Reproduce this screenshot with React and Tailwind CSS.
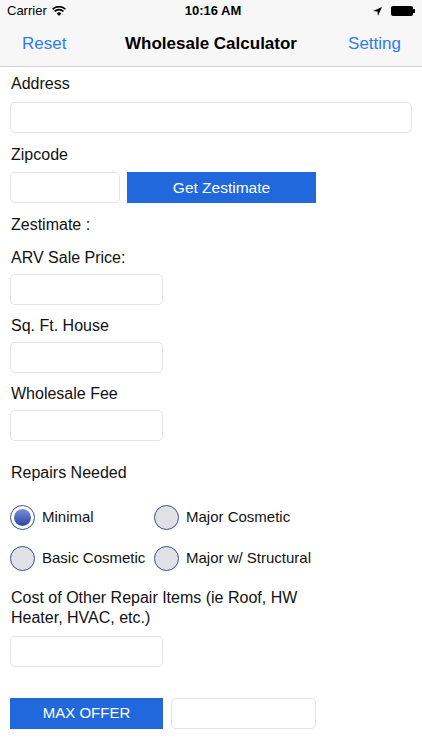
import React, { useState } from "react";

const Field = ({ className = "" }) => (
  <input
    type="text"
    className={`h-[31px] rounded-[5px] border border-[#e3e3e3] bg-white outline-none px-2 text-[16px] ${className}`}
  />
);

const Radio = ({ checked, label, onClick }) => (
  <button onClick={onClick} className="flex items-center gap-[7px] text-left">
    <span
      className={`w-[25px] h-[25px] rounded-full border-[1.5px] border-[#3c4f95] flex items-center justify-center ${
        checked ? "bg-white" : "bg-[#e1e1e5]"
      }`}
    >
      {checked && <span className="w-[17px] h-[17px] rounded-full bg-gradient-to-b from-[#7b8fd8] to-[#2c45a6]"></span>}
    </span>
    <span className="text-[15px] text-[#111]">{label}</span>
  </button>
);

const App = () => {
  const [repair, setRepair] = useState("Minimal");

  return (
    <div className="w-[422px] h-[750px] bg-white overflow-hidden" style={{ fontFamily: '"Liberation Sans", Arial, sans-serif' }}>
      {/* Status + Nav */}
      <div className="bg-[#f7f7f7] border-b border-[#d2d2d2]">
        <div className="h-[22px] flex items-center justify-between px-[7px] text-[13px] text-black">
          <div className="flex items-center gap-[5px] w-[100px]">
            <span>Carrier</span>
            <svg width="14" height="10" viewBox="0 0 14 10">
              <path d="M7 10 L4.6 7.4 A3.4 3.4 0 0 1 9.4 7.4 Z" fill="#000" />
              <path d="M2.6 5.4 A6.3 6.3 0 0 1 11.4 5.4" stroke="#000" strokeWidth="1.6" fill="none" />
              <path d="M0.6 3.2 A9.2 9.2 0 0 1 13.4 3.2" stroke="#000" strokeWidth="1.6" fill="none" />
            </svg>
          </div>
          <span className="font-bold text-[13px] pl-[4px]">10:16 AM</span>
          <div className="flex items-center justify-end gap-[9px] w-[100px]">
            <svg width="9" height="9" viewBox="0 0 10 10">
              <path d="M10 0 L0 4.5 L5 5 L5.5 10 Z" fill="#000" />
            </svg>
            <div className="flex items-center">
              <div className="w-[22px] h-[10px] bg-black rounded-[2px]"></div>
              <div className="w-[1.5px] h-[4px] bg-black"></div>
            </div>
          </div>
        </div>
        <div className="h-[44px] grid grid-cols-[1fr_auto_1fr] items-center px-[21px] text-[17px]">
          <button className="text-[#2d7bf0] justify-self-start pl-[1px]">Reset</button>
          <span className="font-bold text-black">Wholesale Calculator</span>
          <button className="text-[#2d7bf0] justify-self-end">Setting</button>
        </div>
      </div>

      <div className="px-[10px] text-[16px] text-[#111]">
        <div className="pl-[1px] pt-[5px] h-[35px]">Address</div>
        <Field className="w-full" />

        <div className="pl-[1px] pt-[10px] h-[39px]">Zipcode</div>
        <div className="flex gap-[7px]">
          <Field className="w-[110px]" />
          <button className="w-[189px] h-[31px] bg-[#2068db] text-white text-[15.5px]">Get Zestimate</button>
        </div>

        <div className="pl-[1px] pt-[10px] h-[35px]">Zestimate :</div>
        <div className="pl-[1px] pt-[8px] h-[36px]">ARV Sale Price:</div>
        <Field className="w-[153px]" />

        <div className="pl-[1px] pt-[9px] h-[37px]">Sq. Ft. House</div>
        <Field className="w-[153px]" />

        <div className="pl-[1px] pt-[9px] h-[37px]">Wholesale Fee</div>
        <Field className="w-[153px]" />

        <div className="pl-[1px] pt-[20px] h-[64px]">Repairs Needed</div>
        <div className="grid grid-cols-[144px_1fr] gap-y-[16px]">
          <Radio checked={repair === "Minimal"} label="Minimal" onClick={() => setRepair("Minimal")} />
          <Radio checked={repair === "Major Cosmetic"} label="Major Cosmetic" onClick={() => setRepair("Major Cosmetic")} />
          <Radio checked={repair === "Basic Cosmetic"} label="Basic Cosmetic" onClick={() => setRepair("Basic Cosmetic")} />
          <Radio checked={repair === "Major w/ Structural"} label="Major w/ Structural" onClick={() => setRepair("Major w/ Structural")} />
        </div>

        <div className="pl-[1px] pt-[17px] h-[65px] leading-[20px]">
          Cost of Other Repair Items (ie Roof, HW
          <br />
          Heater, HVAC, etc.)
        </div>
        <Field className="w-[153px]" />

        <div className="flex gap-[8px] mt-[31px]">
          <button className="w-[153px] h-[31px] bg-[#2068db] text-white text-[15px]">MAX OFFER</button>
          <Field className="w-[145px]" />
        </div>
      </div>
    </div>
  );
};

export default App;
